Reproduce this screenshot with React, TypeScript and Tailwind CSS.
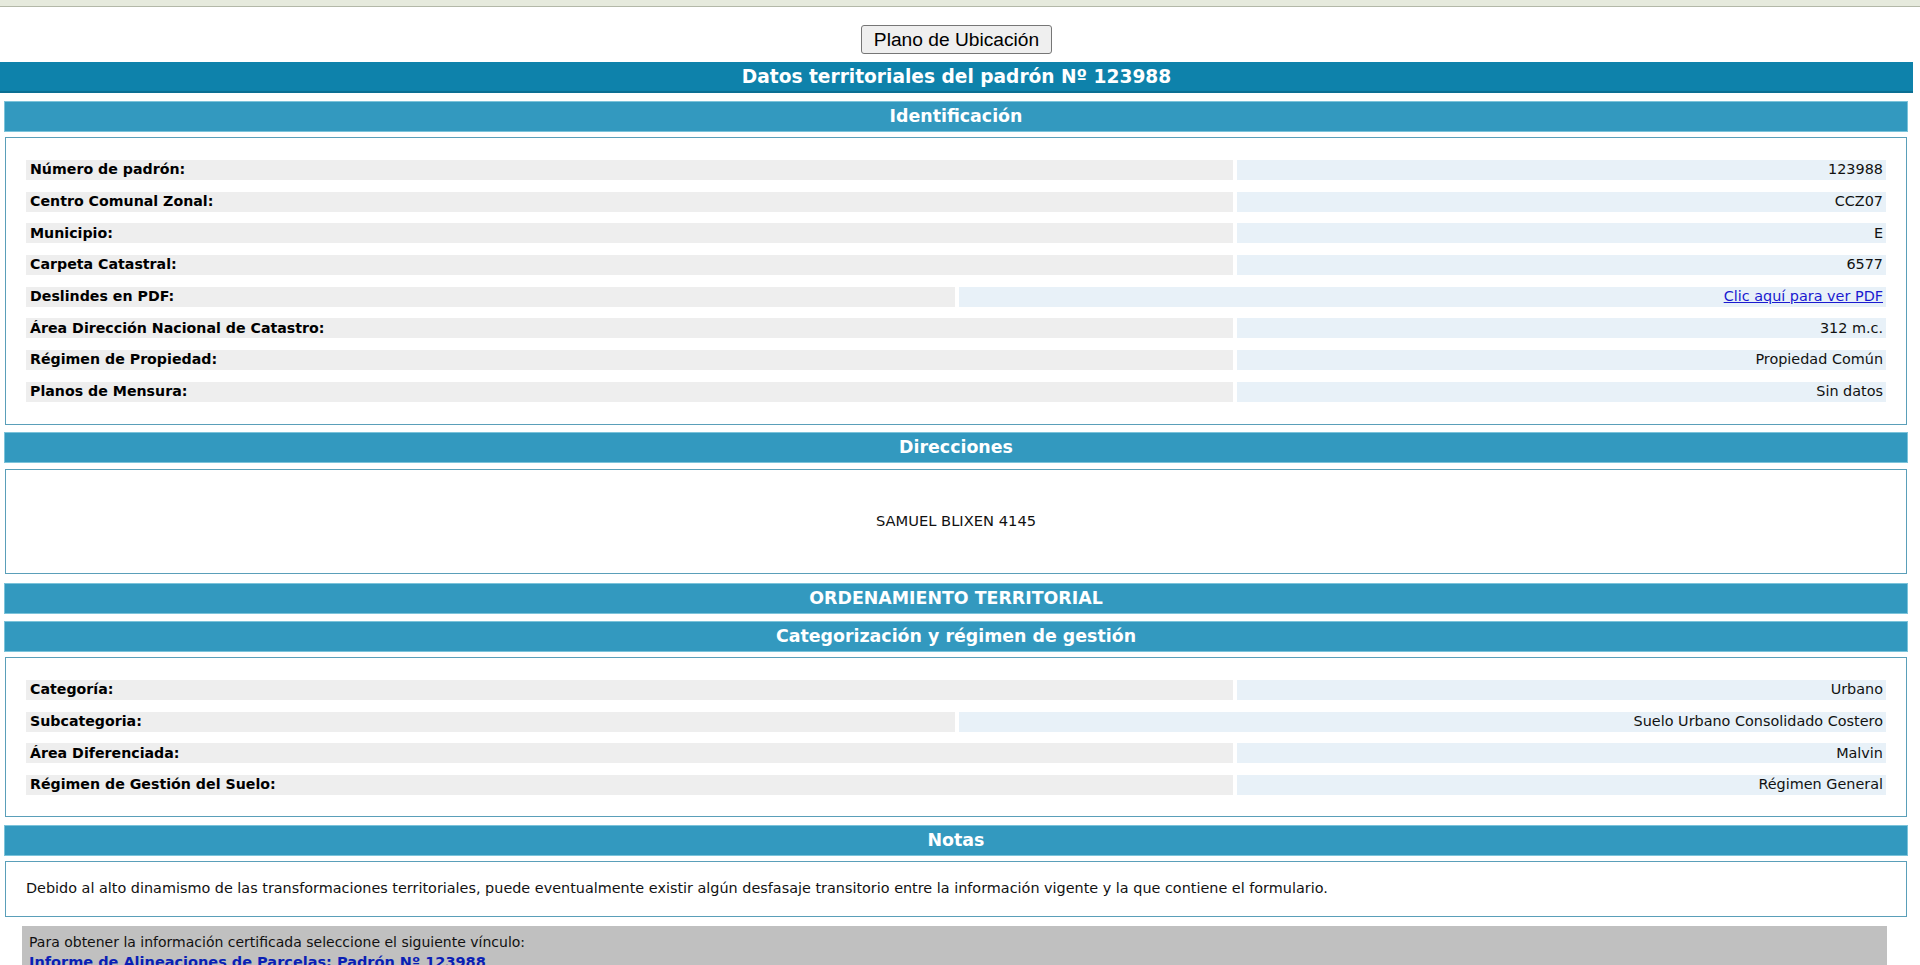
import React from 'react';

type Row = { label: string; value: string; link?: boolean; half?: boolean };

const identificacion: Row[] = [
  { label: 'Número de padrón:', value: '123988' },
  { label: 'Centro Comunal Zonal:', value: 'CCZ07' },
  { label: 'Municipio:', value: 'E' },
  { label: 'Carpeta Catastral:', value: '6577' },
  { label: 'Deslindes en PDF:', value: 'Clic aquí para ver PDF', link: true, half: true },
  { label: 'Área Dirección Nacional de Catastro:', value: '312 m.c.' },
  { label: 'Régimen de Propiedad:', value: 'Propiedad Común' },
  { label: 'Planos de Mensura:', value: 'Sin datos' },
];

const categorizacion: Row[] = [
  { label: 'Categoría:', value: 'Urbano' },
  { label: 'Subcategoria:', value: 'Suelo Urbano Consolidado Costero', half: true },
  { label: 'Área Diferenciada:', value: 'Malvin' },
  { label: 'Régimen de Gestión del Suelo:', value: 'Régimen General' },
];

function SectionHeader({ title, className = '' }: { title: string; className?: string }) {
  return (
    <div
      className={`ml-[4px] mr-[5px] h-[31px] flex items-center justify-center bg-[#3399bf] border border-[#7cc3da] text-white font-bold text-[17.4px] ${className}`}
    >
      {title}
    </div>
  );
}

function DataRows({ rows }: { rows: Row[] }) {
  return (
    <div className="flex flex-col gap-[11.7px]">
      {rows.map((r) => (
        <div key={r.label} className="flex h-[20px] gap-[4px]">
          <div
            className={`${r.half ? 'w-[929px]' : 'w-[1207px]'} shrink-0 bg-[#eeeeee] pl-[4px] flex items-center font-bold text-[14.2px] text-black`}
          >
            {r.label}
          </div>
          <div className="flex-1 bg-[#e8f1f8] pr-[3px] flex items-center justify-end text-[14.4px] text-[#111]">
            {r.link ? (
              <a href="#" className="text-[#1a1ad0] underline">
                {r.value}
              </a>
            ) : (
              r.value
            )}
          </div>
        </div>
      ))}
    </div>
  );
}

function Box({ children, className = '' }: { children: React.ReactNode; className?: string }) {
  return (
    <div className={`ml-[5px] mr-[6px] border border-[#5a9fb9] bg-white ${className}`}>{children}</div>
  );
}

export default function App() {
  return (
    <div className="min-h-screen bg-white text-[14.4px] text-black" style={{ fontFamily: '"DejaVu Sans", Verdana, sans-serif' }}>
      <div className="h-[7px] bg-[#e6eadd] border-b border-[#b3b8a8]" />

      <div className="w-[1913px]">
        <div className="flex justify-center pt-[18px] pb-[8px]">
          <button
            type="button"
            className="h-[29px] px-[12px] bg-[#efefef] border border-[#767676] rounded-[3px] text-[19.2px] text-black leading-none"
            style={{ fontFamily: '"Liberation Sans", Arial, sans-serif' }}
          >
            Plano de Ubicación
          </button>
        </div>

        <div className="h-[31px] flex items-center justify-center bg-[#0e82ab] border-b-2 border-[#0b6f93] text-white font-bold text-[18.6px]">
          Datos territoriales del padrón Nº 123988
        </div>

        <SectionHeader title="Identificación" className="mt-[8px]" />
        <Box className="mt-[5px] h-[288px] pt-[22px] pl-[20px] pr-[20px]">
          <DataRows rows={identificacion} />
        </Box>

        <SectionHeader title="Direcciones" className="mt-[7px]" />
        <Box className="mt-[6px] h-[105px] flex items-center justify-center">
          <span className="text-[14.7px] text-[#111]">SAMUEL BLIXEN 4145</span>
        </Box>

        <SectionHeader title="ORDENAMIENTO TERRITORIAL" className="mt-[9px]" />
        <SectionHeader title="Categorización y régimen de gestión" className="mt-[7px]" />
        <Box className="mt-[5px] h-[160px] pt-[22px] pl-[20px] pr-[20px]">
          <DataRows rows={categorizacion} />
        </Box>

        <SectionHeader title="Notas" className="mt-[8px]" />
        <Box className="mt-[5px] h-[56px] flex items-center pl-[20px]">
          <span className="text-[#111]">
            Debido al alto dinamismo de las transformaciones territoriales, puede eventualmente existir algún desfasaje transitorio entre la información vigente y la que contiene el formulario.
          </span>
        </Box>

        <div className="mt-[9px] ml-[22px] mr-[26px] bg-[#c0c0c0] pt-[7px] pb-[8px] pl-[7px] leading-[19.5px]">
          <div className="text-[14px] text-[#111]">Para obtener la información certificada seleccione el siguiente vínculo:</div>
          <a href="#" className="font-bold text-[14.5px] text-[#0b1fb5] underline">
            Informe de Alineaciones de Parcelas: Padrón Nº 123988
          </a>
        </div>
      </div>
    </div>
  );
}
